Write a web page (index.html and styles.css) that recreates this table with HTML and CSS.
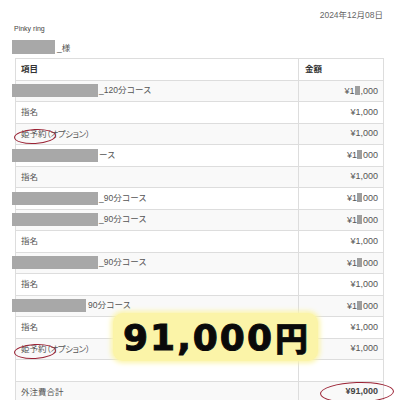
FILE: index.html
```html
<!DOCTYPE html>
<html lang="ja">
<head>
    <meta charset="UTF-8">
    <meta name="viewport" content="width=device-width, initial-scale=1.0">
    <title>Pinky ring - 明細</title>
    <link rel="stylesheet" href="styles.css">
</head>
<body>
    <div class="page">
        <div class="date">2024年12月08日</div>
        <div class="shop">Pinky ring</div>
        <div class="customer"><span class="mask mask-name"></span>_様</div>

        <div class="invoice">
            <table class="items">
                <thead>
                    <tr>
                        <th class="col-name">項目</th>
                        <th class="col-price">金額</th>
                    </tr>
                </thead>
                <tbody>
                    <tr>
                        <td><span class="mask mask-row"></span>_120分コース</td>
                        <td class="price">¥1<span class="mask mask-digit"></span>,000</td>
                    </tr>
                    <tr>
                        <td>指名</td>
                        <td class="price">¥1,000</td>
                    </tr>
                    <tr>
                        <td><span class="circled">姫予約</span><span class="option">（オプション）</span></td>
                        <td class="price">¥1,000</td>
                    </tr>
                    <tr>
                        <td><span class="mask mask-row"></span>ース</td>
                        <td class="price">¥1<span class="mask mask-digit"></span>000</td>
                    </tr>
                    <tr>
                        <td>指名</td>
                        <td class="price">¥1,000</td>
                    </tr>
                    <tr>
                        <td><span class="mask mask-row"></span>_90分コース</td>
                        <td class="price">¥1<span class="mask mask-digit"></span>000</td>
                    </tr>
                    <tr>
                        <td><span class="mask mask-row"></span>_90分コース</td>
                        <td class="price">¥1<span class="mask mask-digit"></span>000</td>
                    </tr>
                    <tr>
                        <td>指名</td>
                        <td class="price">¥1,000</td>
                    </tr>
                    <tr>
                        <td><span class="mask mask-row"></span>_90分コース</td>
                        <td class="price">¥1<span class="mask mask-digit"></span>000</td>
                    </tr>
                    <tr>
                        <td>指名</td>
                        <td class="price">¥1,000</td>
                    </tr>
                    <tr>
                        <td><span class="mask mask-short"></span>90分コース</td>
                        <td class="price">¥1<span class="mask mask-digit"></span>000</td>
                    </tr>
                    <tr>
                        <td>指名</td>
                        <td class="price">¥1,000</td>
                    </tr>
                    <tr>
                        <td><span class="circled">姫予約</span><span class="option">（オプション）</span></td>
                        <td class="price">¥1,000</td>
                    </tr>
                    <tr>
                        <td></td>
                        <td class="price"></td>
                    </tr>
                    <tr>
                        <td>外注費合計</td>
                        <td class="price"><span class="total">¥91,000</span></td>
                    </tr>
                </tbody>
            </table>

            <div class="stamp">91,000<span class="yen">円</span></div>
        </div>
    </div>
</body>
</html>
```

FILE: styles.css
```css
* {
    box-sizing: border-box;
    margin: 0;
    padding: 0;
}

body {
    background: #ffffff;
    color: #555555;
    font-family: 'Liberation Sans', 'Noto Sans CJK JP', sans-serif;
    font-size: 8.5px;
    overflow: hidden;
}

.page {
    width: 400px;
    height: 400px;
    padding: 0 16px 0 15px;
}

.date {
    height: 10px;
    margin-top: 10px;
    line-height: 10px;
    text-align: right;
    padding-right: 1px;
    color: #666666;
}

.shop {
    height: 10px;
    margin-top: 4px;
    margin-left: -1px;
    line-height: 10px;
    font-size: 7px;
    color: #444444;
}

.customer {
    display: flex;
    align-items: center;
    height: 14px;
    margin-top: 6px;
    margin-left: -3px;
    color: #555555;
}

.mask {
    display: inline-block;
    background: #a8a8a8;
    vertical-align: middle;
}

.mask-name {
    width: 43px;
    height: 14px;
    margin-right: 2px;
}

.mask-row {
    width: 86px;
    height: 13px;
    margin-left: -9px;
    margin-right: 1px;
}

.mask-short {
    width: 74px;
    height: 13px;
    margin-left: -9px;
    margin-right: 2px;
}

.mask-digit {
    width: 5px;
    height: 9px;
    margin: 0 0.5px;
    background: #9e9e9e;
    vertical-align: -1px;
}

.invoice {
    position: relative;
    margin-top: 4px;
}

.items {
    width: 100%;
    border-collapse: collapse;
    border: 1px solid #dddddd;
    table-layout: fixed;
}

.items tr {
    height: 21.5px;
}

.items th,
.items td {
    padding: 0 5px;
    border-top: 1px solid #dddddd;
    text-align: left;
    vertical-align: middle;
    line-height: 1;
    white-space: nowrap;
}

.items th {
    font-weight: bold;
    color: #333333;
}

.col-name {
    width: 283px;
}

.items .col-price {
    border-left: 1px solid #dddddd;
    padding-left: 6px;
}

.items td.price {
    border-left: 1px solid #dddddd;
    text-align: right;
    font-size: 9px;
}

.items tbody tr:nth-child(odd) {
    background: #f9f9f9;
}

.option {
    font-feature-settings: "palt";
    letter-spacing: -0.4px;
}

.circled {
    position: relative;
}

.circled::after {
    content: "";
    position: absolute;
    left: -7px;
    top: 50%;
    width: 40px;
    height: 13px;
    margin-top: -5px;
    border: 1px solid #9b2335;
    border-radius: 50%;
    transform: rotate(-3deg);
}

.total {
    position: relative;
    font-weight: bold;
    color: #444444;
}

.total::after {
    content: "";
    position: absolute;
    left: -25px;
    top: 50%;
    width: 72px;
    height: 19px;
    margin-top: -9px;
    border: 1px solid #9b2335;
    border-radius: 50%;
    transform: rotate(-2deg);
}

.stamp {
    position: absolute;
    left: 98px;
    top: 255px;
    width: 205px;
    height: 48px;
    display: flex;
    align-items: center;
    justify-content: center;
    background: #fbf4a8;
    border-radius: 10px;
    box-shadow: 0 0 5px 2px #fbf4a8;
    color: #0a0a0a;
    font-family: 'DejaVu Sans', sans-serif;
    font-weight: bold;
    font-size: 36px;
    letter-spacing: 2px;
    -webkit-text-stroke: 1px #0a0a0a;
}

.stamp .yen {
    font-family: 'Noto Sans CJK JP', sans-serif;
    font-weight: 900;
    font-size: 33px;
    letter-spacing: 0;
    margin-left: 1px;
    -webkit-text-stroke: 0.5px #0a0a0a;
}
```
